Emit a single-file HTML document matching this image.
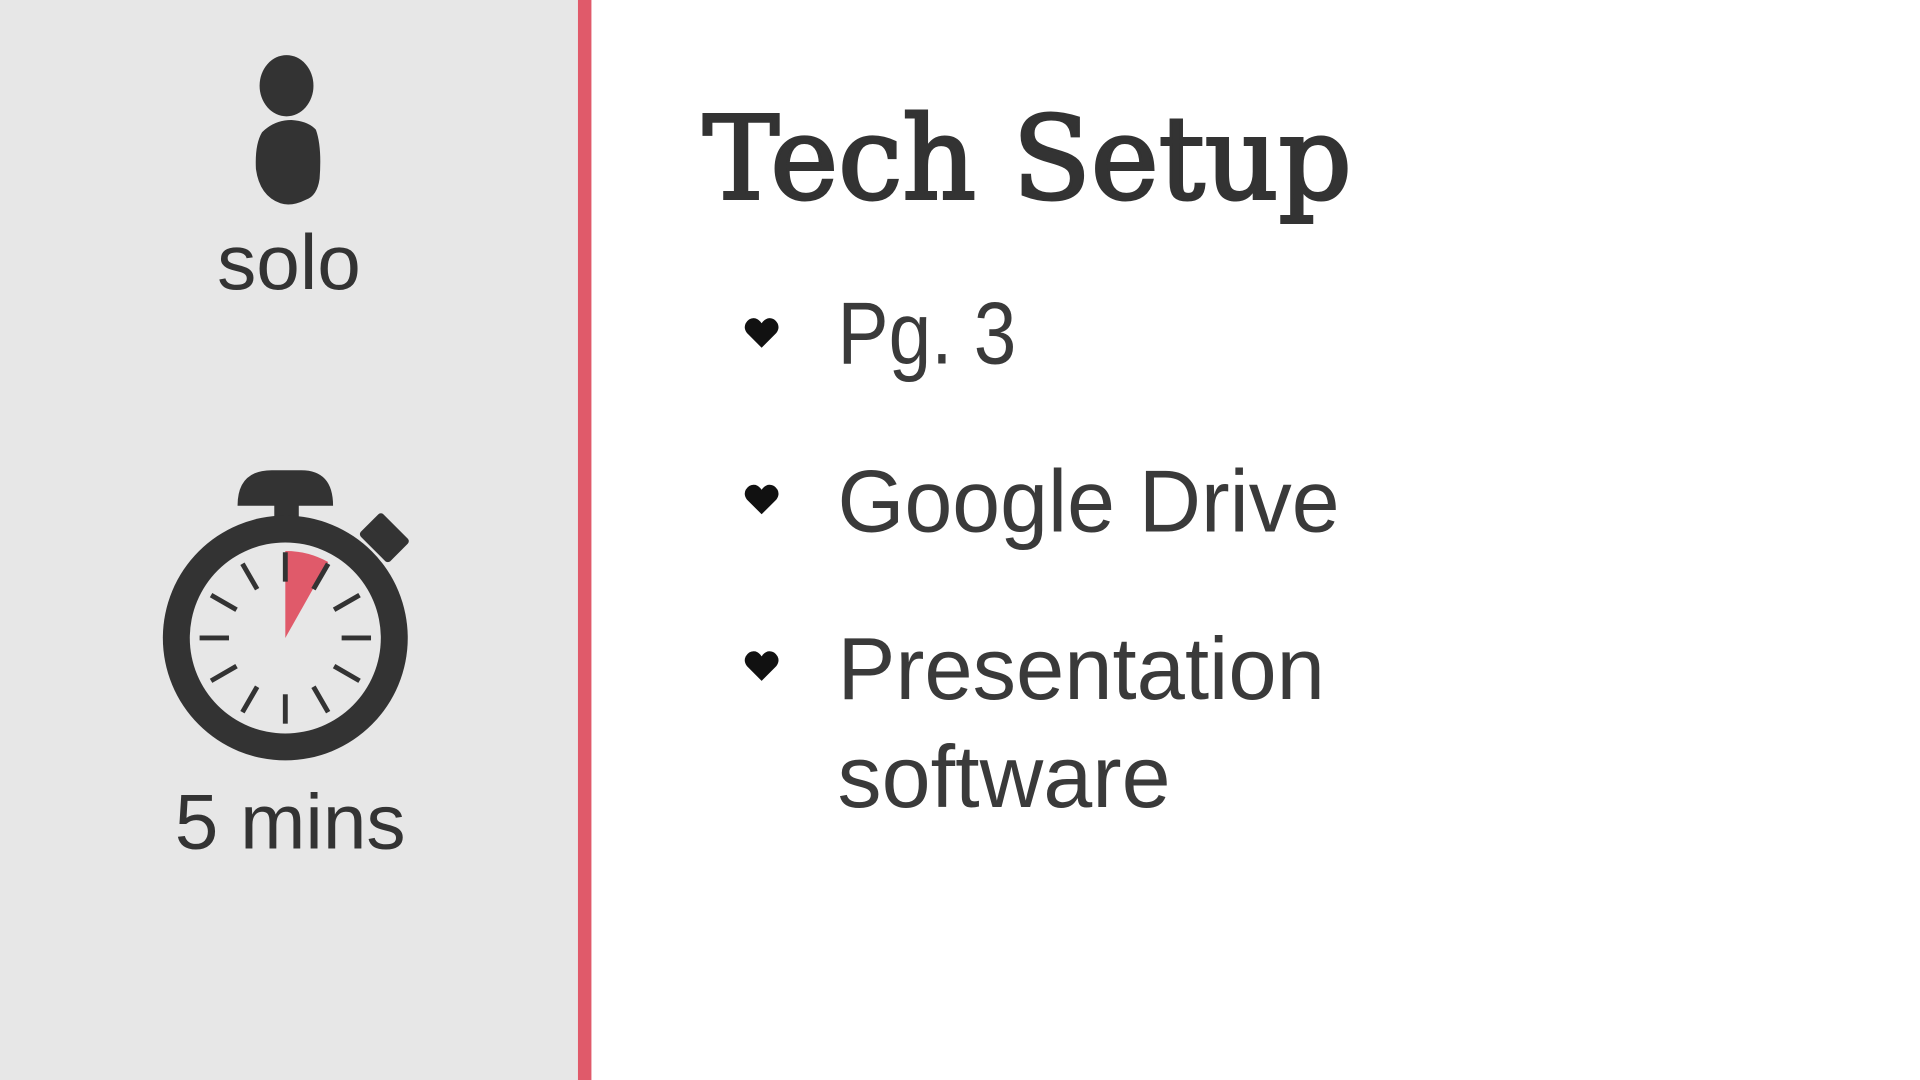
<!DOCTYPE html>
<html><head><meta charset="utf-8"><style>
html,body{margin:0;padding:0;width:1920px;height:1080px;overflow:hidden;background:#fff}
svg{display:block}
</style></head><body>
<svg width="1920" height="1080" viewBox="0 0 1568 882" xmlns="http://www.w3.org/2000/svg">
<rect x="0" y="0" width="472" height="882" fill="#e7e7e7"/>
<rect x="472" y="0" width="11" height="882" fill="#e05a6a"/>
<ellipse cx="234" cy="70" rx="22" ry="25" fill="#333"/>
<path d="M214 108 Q224 98 238 98 Q252 99 258 106 Q263 120 261 146 Q259 160 250 163 Q238 169 229 166 Q212 160 209 138 Q208 118 214 108Z" fill="#333"/>
<text x="236" y="236" font-family="Liberation Sans, sans-serif" font-size="64" fill="#333" text-anchor="middle">solo</text>
<path d="M194 413 Q194 384 222 384 L246 384 Q272 384 272 413Z" fill="#333"/>
<rect x="224" y="410" width="20" height="18" fill="#333"/>
<rect x="300" y="420" width="26" height="34" rx="3" fill="#333" transform="rotate(-45 316 437)"/>
<circle cx="233" cy="521" r="100" fill="#333"/>
<circle cx="233" cy="521" r="78" fill="#e7e7e7"/>
<path d="M233 521 L233 450 A71 71 0 0 1 268 459Z" fill="#e05a6a"/>
<g stroke="#333" stroke-width="4">
<line x1="233" y1="451" x2="233" y2="475"/>
<line x1="233" y1="567" x2="233" y2="591"/>
<line x1="163" y1="521" x2="187" y2="521"/>
<line x1="279" y1="521" x2="303" y2="521"/>
<g transform="rotate(30 233 521)"><line x1="233" y1="451" x2="233" y2="475"/><line x1="233" y1="567" x2="233" y2="591"/></g>
<g transform="rotate(60 233 521)"><line x1="233" y1="451" x2="233" y2="475"/><line x1="233" y1="567" x2="233" y2="591"/></g>
<g transform="rotate(120 233 521)"><line x1="233" y1="451" x2="233" y2="475"/><line x1="233" y1="567" x2="233" y2="591"/></g>
<g transform="rotate(150 233 521)"><line x1="233" y1="451" x2="233" y2="475"/><line x1="233" y1="567" x2="233" y2="591"/></g>
</g>
<text x="237" y="693" font-family="Liberation Sans, sans-serif" font-size="64" fill="#333" text-anchor="middle">5 mins</text>
<text x="574" y="162" font-family="DejaVu Serif, Liberation Serif, serif" font-size="94" fill="#333" stroke="#333" stroke-width="2.5" textLength="530" lengthAdjust="spacingAndGlyphs">Tech Setup</text>
<g fill="#111">
<path d="M622 284 L610 272 Q607 268 609 264 Q612 259 617 260 Q620 261 622 264 Q624 261 627 260 Q632 259 635 264 Q637 268 634 272Z"/>
<path d="M622 420 L610 408 Q607 404 609 400 Q612 395 617 396 Q620 397 622 400 Q624 397 627 396 Q632 395 635 400 Q637 404 634 408Z"/>
<path d="M622 556 L610 544 Q607 540 609 536 Q612 531 617 532 Q620 533 622 536 Q624 533 627 532 Q632 531 635 536 Q637 540 634 544Z"/>
</g>
<g font-family="Liberation Sans, sans-serif" font-size="72" fill="#3a3a3a">
<text x="684" y="297" textLength="146" lengthAdjust="spacingAndGlyphs">Pg. 3</text>
<text x="684" y="434" textLength="410" lengthAdjust="spacingAndGlyphs">Google Drive</text>
<text x="684" y="571" textLength="398" lengthAdjust="spacingAndGlyphs">Presentation</text>
<text x="684" y="659" textLength="272" lengthAdjust="spacingAndGlyphs">software</text>
</g>
</svg>
</body></html>
